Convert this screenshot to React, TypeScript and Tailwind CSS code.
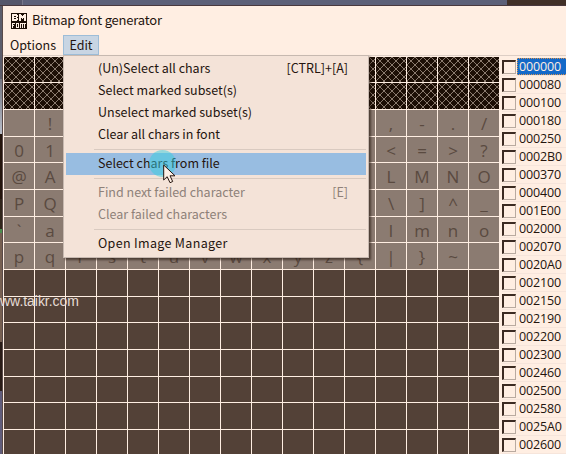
import React from "react";

const glyphRows = [
  " !\"#$%&'()*+,-./",
  "0123456789:;<=>?",
  "@ABCDEFGHIJKLMNO",
  "PQRSTUVWXYZ[\\]^_",
  "`abcdefghijklmno",
  "pqrstuvwxyz{|}~ ",
];
const subsets = ["000000", "000080", "000100", "000180", "000250", "0002B0", "000370", "000400", "001E00", "002000", "002070", "0020A0", "002100", "002150", "002190", "002200", "002300", "002460", "002500", "002580", "0025A0", "002600"];
const rowHeights = [26, 27, 27, 26, 27, 27, 26, 27, 27, 26, 27, 27, 26, 27, 26];
const columns = Array.from({ length: 16 }, (_, i) => i);

function Hatch() {
  return (
    <svg className="block h-full w-full" aria-hidden="true">
      <defs>
        <pattern id="lattice" width="8" height="8" patternUnits="userSpaceOnUse">
          <path d="M0 0h1v1h-1zM1 1h1v1h-1zM2 2h1v1h-1zM3 3h1v1h-1zM4 4h1v1h-1zM5 5h1v1h-1zM6 6h1v1h-1zM7 7h1v1h-1zM7 0h1v1h-1zM6 1h1v1h-1zM5 2h1v1h-1zM4 3h1v1h-1zM3 4h1v1h-1zM2 5h1v1h-1zM1 6h1v1h-1zM0 7h1v1h-1z" fill="#89796d" shapeRendering="crispEdges" />
        </pattern>
      </defs>
      <rect width="100%" height="100%" fill="url(#lattice)" />
    </svg>
  );
}

function Cell({ row, col }: { row: number; col: number }) {
  const tone = row < 2 ? "bg-[#1c0e05]" : row < 8 ? "bg-[#8b7b71]" : "bg-[#534137]";
  const glyph = row >= 2 && row < 8 ? glyphRows[row - 2][col] : " ";
  return (
    <div className={`flex items-center justify-center overflow-hidden border-b border-[#ffeee2] ${col < 15 ? "border-r" : ""} ${tone}`}>
      {row < 2 && <Hatch />}
      {glyph !== " " && <span className="pt-px text-[17px] leading-none text-[#5a4a40]">{glyph}</span>}
    </div>
  );
}

function Item({ label, keys, disabled, active, wide }: { label: string; keys?: string; disabled?: boolean; active?: boolean; wide?: boolean }) {
  return (
    <div className={`mx-[2px] flex h-[22px] shrink-0 items-center justify-between pr-[18px] pb-[2px] pl-[32px] leading-[18px] ${disabled ? "text-[#8e8179]" : "text-[#24140e]"} ${active ? "bg-[#98bde1]" : ""}`}>
      <span className={wide ? "tracking-[0.33px]" : ""}>{label}</span>
      {keys && <span>{keys}</span>}
    </div>
  );
}

function Separator() {
  return <div className="my-[3px] mr-[2px] ml-[30px] h-px shrink-0 bg-[#d9cac0]" />;
}

function Logo() {
  return (
    <svg className="h-4 w-4" viewBox="0 0 16 16" shapeRendering="crispEdges" aria-hidden="true">
      <rect width="16" height="16" rx="1" fill="#1c0e05" />
      <path d="M1 1h5v1h1v2h-1v1h1v2h-1v1h-5zM3 3v1h2v-1zM3 5v1h2v-1zM8 1h2v1h1v1h1v-1h1v-1h2v7h-2v-3h-1v1h-1v-1h-1v3h-2z" fill="#fff0e4" fillRule="evenodd" />
      <path d="M1 10h3v1h-2v1h1v1h-1v2h-1zM5 10h3v5h-3zM6 11v3h1v-3zM9 10h3v5h-1v-4h-1v4h-1zM12 10h3v1h-1v4h-1v-4h-1z" fill="#fff0e4" fillRule="evenodd" />
    </svg>
  );
}

export default function App() {
  return (
    <main className="relative flex h-[454px] w-[566px] flex-col overflow-hidden bg-[#ffeee2] font-['Noto_Sans_CJK_SC','Noto_Sans',sans-serif] text-[12.5px] text-[#24140e]">
      <div className="flex h-[6px] shrink-0 border-b border-[#49383d]">
        <div className="w-[22px] bg-[#55566a]" />
        <div className="w-px bg-[#777789]" />
        <div className="w-[484px] bg-[#5c6078]" />
        <div className="flex-1 bg-[#413027]" />
      </div>
      <div className="flex min-h-0 flex-1">
        <div className="flex w-[3px] shrink-0 flex-col border-r border-[#594a49]">
          <div className="h-[73px] bg-[#5b5c6b]" />
          <div className="h-[55px] bg-gradient-to-b from-[#777984] to-[#b8bdc8]" />
          <div className="h-[65px] bg-[#24140c]" />
          <div className="h-[30px] bg-[#30251b]" />
          <div className="h-1 bg-[#4b8e4e]" />
          <div className="h-[109px] bg-[#765f51]" />
          <div className="h-[49px] bg-[#291b16]" />
          <div className="flex-1 bg-[#615d7b]" />
        </div>
        <div className="flex min-w-0 flex-1 flex-col">
          <header className="flex h-[29px] shrink-0 items-center gap-[5px] pl-2">
            <Logo />
            <h1 className="pb-[2px] text-[13px] leading-[18px] tracking-[-0.2px]">Bitmap font generator</h1>
          </header>
          <nav className="flex h-[21px] shrink-0 border-b border-[#ddcec5]">
            <div className="flex w-[60px] items-center justify-center pb-px leading-[18px]">Options</div>
            <div className="relative w-9">
              <div className="flex h-5 items-center justify-center border border-[#9dbdd8] bg-[#c8d5e3] pb-px leading-[18px]">Edit</div>
              <div className="absolute top-5 left-0 z-10 flex h-[203px] w-[306px] flex-col border border-[#c7b9b0] bg-[#f4e3d8] pt-[2px] shadow-[2px_2px_2px_rgba(35,20,12,0.6)]">
                <Item label="(Un)Select all chars" keys="[CTRL]+[A]" />
                <Item label="Select marked subset(s)" />
                <Item label="Unselect marked subset(s)" />
                <Item label="Clear all chars in font" />
                <Separator />
                <Item label="Select chars from file" active />
                <Separator />
                <Item label="Find next failed character" keys="[E]" disabled />
                <Item label="Clear failed characters" disabled />
                <Separator />
                <Item label="Open Image Manager" wide />
                <div className="absolute top-[94px] left-[85px] h-[27px] w-[27px] rounded-full bg-[#35cddf]/50" />
                <svg className="absolute top-[108px] left-[99px] h-[21px] w-[13px]" viewBox="0 0 13 21" aria-hidden="true">
                  <path d="M.7 1V16L4.2 12.7L7 18.7L9.7 17.5L7 11.8H12Z" fill="#fff0e6" stroke="#24140e" />
                </svg>
              </div>
            </div>
          </nav>
          <div className="flex min-h-0 flex-1">
            <section className="w-[496px] shrink-0 border-l border-[#ffeee2] pt-px font-['Open_Sans',sans-serif]">
              {rowHeights.map((height, row) => (
                <div key={row} className="grid grid-cols-[repeat(15,31px)_30px]" style={{ height }}>
                  {columns.map((col) => <Cell key={col} row={row} col={col} />)}
                </div>
              ))}
            </section>
            <aside className="min-w-0 flex-1 pt-[2px] pl-[3px] font-['Open_Sans',sans-serif]">
              {subsets.map((code, index) => (
                <div key={code} className="flex h-[18px] items-center border-b border-[#f6e5db]">
                  <div className="mr-px h-[14px] w-[14px] shrink-0 border-t-2 border-r border-b border-l-2 border-t-[#3b2a21] border-r-[#b9aaa0] border-b-[#b9aaa0] border-l-[#3b2a21]" />
                  <div className={`flex h-[17px] flex-1 items-center text-[12.5px] leading-[17px] tracking-[-0.15px] ${index === 0 ? "border border-r-0 border-dotted border-[#d69452] bg-[#1469c8] pl-px text-[#ffeee2]" : "pl-[2px]"}`}>{code}</div>
                </div>
              ))}
            </aside>
          </div>
        </div>
      </div>
      <div className="absolute top-[292px] left-[-10px] font-['Liberation_Sans',sans-serif] text-[14px] leading-[18px] tracking-[-0.05px] text-[#e5dbd4]">www.taikr.com</div>
    </main>
  );
}
